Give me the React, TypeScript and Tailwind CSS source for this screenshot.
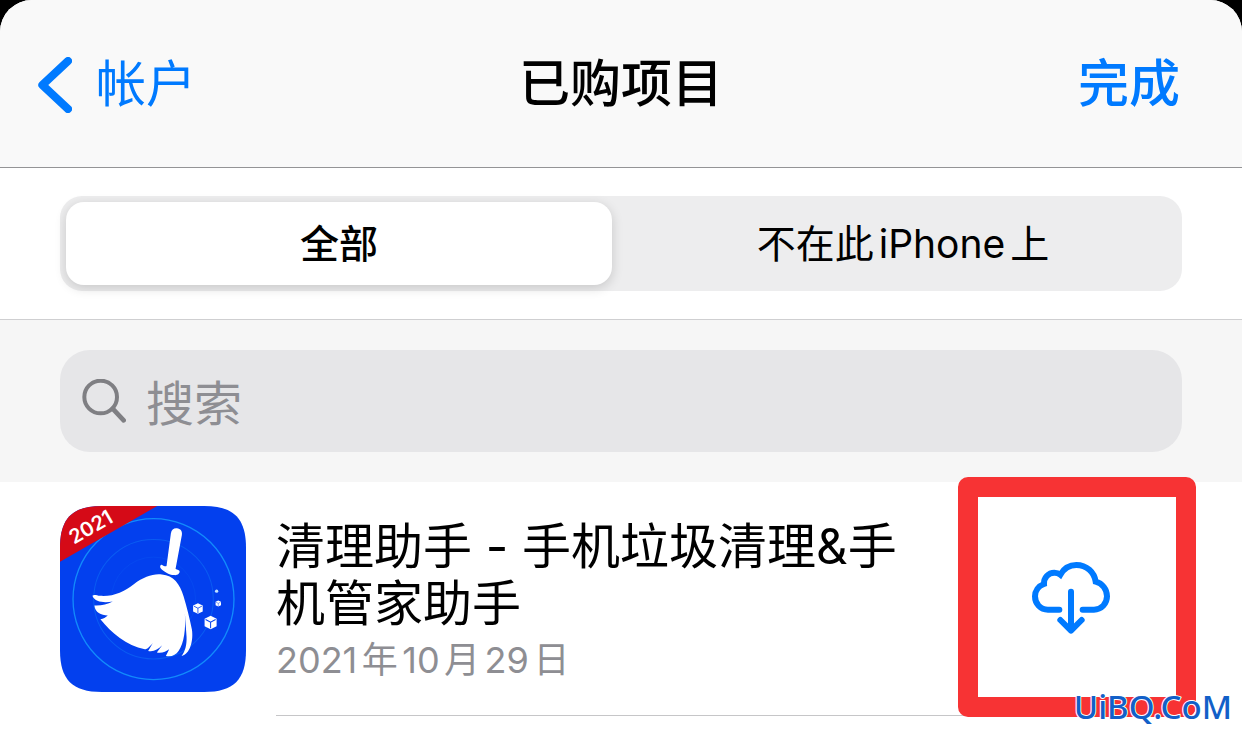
import { useState } from "react";

const segments = ["全部", "不在此iPhone上"];

const BackIcon = () => (
  <svg className="h-14 w-[34px]" viewBox="0 0 102 168" fill="none" aria-hidden="true">
    <path
      d="M90 12 L13 84 L90 156"
      stroke="#007aff"
      strokeWidth="24"
      strokeLinecap="round"
      strokeLinejoin="round"
    />
  </svg>
);

const SearchIcon = () => (
  <svg className="h-11 w-11 shrink-0" viewBox="0 0 132 132" fill="none" aria-hidden="true">
    <circle cx="56" cy="54" r="49" stroke="#7f7f83" strokeWidth="12" />
    <path d="M92 89 L125 124" stroke="#7f7f83" strokeWidth="14" strokeLinecap="round" />
  </svg>
);

const CloudIcon = () => (
  <svg className="h-[77px] w-[82px]" viewBox="270 300 246 231" fill="none" aria-hidden="true">
    <g stroke="#007aff" strokeWidth="18" strokeLinecap="round">
      <path d="M358 452H324C301 452 285 434 285 412C285 396 295 381 312 375C311 356 325 341 343 341C350 341 356 343 361 347C372 328 389 318 409 318C440 318 463 340 467 368C487 373 501 391 501 412C501 434 484 452 462 452H428" />
      <path d="M393 398V512M361 483L393 515L425 483" strokeLinejoin="round" />
    </g>
  </svg>
);

const Cube = ({ x, y, scale }: { x: number; y: number; scale: number }) => (
  <g transform={`translate(${x} ${y}) scale(${scale})`}>
    <path d="M0 -20L18 -11V11L0 20L-18 11V-11Z" fill="#fff" />
    <path d="M-15 -9L0 -1L15 -9M0 -1V17" fill="none" stroke="#0340ee" strokeWidth="3" />
  </g>
);

const AppIcon = () => (
  <svg
    className="h-[186px] w-[186px] shrink-0"
    viewBox="30 30 557 557"
    role="img"
    aria-label="清理助手"
  >
    <defs>
      <clipPath id="app-icon">
        <path d="M155 30H462C550 30 587 67 587 155V462C587 550 550 587 462 587H155C67 587 30 550 30 462V155C30 67 67 30 155 30Z" />
      </clipPath>
    </defs>
    <g clipPath="url(#app-icon)">
      <path d="M30 30H587V587H30Z" fill="#0340ee" />
      <circle cx="310" cy="309" r="241" fill="none" stroke="#128bfb" strokeWidth="4" />
      <circle cx="310" cy="309" r="179" fill="none" stroke="#0a5cf2" strokeWidth="3" />
      <circle cx="310" cy="309" r="126" fill="none" stroke="#074df0" strokeWidth="2" />
      <path d="M30 30H321L30 197Z" fill="#d50a17" />
      <path
        d="M362 112C364 101 371 96 380 97C391 98 397 106 395 117L376 219C382 222 387 222 388 225C389 233 382 238 372 237C355 236 341 226 332 217C328 212 330 206 335 206C341 210 346 212 349 210Z"
        fill="#fff"
      />
      <path
        d="M127 299C133 294 140 299 150 299C190 302 222 286 251 264C281 242 308 232 335 235C370 238 389 263 400 300C410 333 418 365 425 400C430 432 420 474 394 479C405 465 410 445 409 422L404 352C407 399 402 440 385 464C377 476 365 482 347 479L357 459C347 466 336 472 320 469L336 447C323 460 309 468 294 464L308 440C300 449 292 459 284 459C229 448 184 410 151 369C160 368 167 364 173 358C153 357 135 349 133 328C153 329 171 325 188 316C166 320 135 320 127 299Z"
        fill="#fff"
      />
      <Cube x={481} y={379} scale={1} />
      <Cube x={443} y={337} scale={0.8} />
      <Cube x={504} y={322} scale={0.45} />
      <circle cx="499" cy="285" r="5" fill="#bfe0ff" />
    </g>
    <text
      className="font-['Inter',sans-serif]"
      x="122"
      y="114"
      fontSize="60"
      fontWeight="600"
      fill="#fff"
      textAnchor="middle"
      transform="rotate(-30 122 93)"
    >
      2021
    </text>
  </svg>
);

const Watermark = () => (
  <span className="absolute right-[10px] bottom-[3px] font-['Noto_Sans',sans-serif] text-[33px] leading-[44px] font-medium text-[#1260c8] [-webkit-text-stroke:2px_white] [paint-order:stroke_fill]">
    UiBQ.CoM
  </span>
);

export default function App() {
  const [active, setActive] = useState(segments[0]);
  const [query, setQuery] = useState("");

  return (
    <div className="relative min-h-screen bg-black font-['Inter','Noto_Sans_CJK_SC',sans-serif] [text-autospace:normal]">
      <div className="min-h-screen rounded-t-[32px] bg-white">
        <header className="grid h-[168px] grid-cols-[1fr_auto_1fr] items-center rounded-t-[32px] border-b border-[#949496] bg-[#f9f9f9] px-[38px] pt-[2px]">
          <button className="flex items-center gap-6 text-[50px] text-[#007aff]">
            <BackIcon />
            帐户
          </button>
          <h1 className="text-[51px] font-medium text-black">已购项目</h1>
          <button className="justify-self-end pr-6 text-[51px] font-medium text-[#007aff]">
            完成
          </button>
        </header>

        <div className="border-b border-[#cfcfd1] px-[60px] py-7">
          <div className="grid h-[95px] grid-cols-2 gap-[18px] rounded-[22px] bg-[#ededee] p-[6px]">
            {segments.map((segment) => (
              <button
                key={segment}
                onClick={() => setActive(segment)}
                className={
                  active === segment
                    ? "rounded-[18px] bg-white pt-[2px] text-[39px] font-medium shadow-[0_3px_12px_rgba(0,0,0,0.16)]"
                    : "rounded-[18px] pt-[2px] text-[39px]"
                }
              >
                {segment}
              </button>
            ))}
          </div>
        </div>

        <div className="bg-[#f6f6f6] px-[60px] py-[30px]">
          <label className="flex h-[102px] items-center gap-5 rounded-[30px] bg-[#e6e6e8] px-[22px]">
            <SearchIcon />
            <input
              className="w-full bg-transparent pt-1 text-5xl outline-none placeholder:text-[#8e8e93]"
              type="text"
              aria-label="搜索"
              placeholder="搜索"
              value={query}
              onChange={(event) => setQuery(event.target.value)}
            />
          </label>
        </div>

        <main className="flex gap-[30px] pt-6 pr-[46px] pl-[60px]">
          <AppIcon />
          <div className="relative flex-1 border-b border-[#c6c6c8] pt-3 pb-[26px]">
            <h2 className="w-[640px] text-[49px] leading-[57px] text-black">
              清理助手 - 手机垃圾清理&amp;手机管家助手
            </h2>
            <p className="text-4xl leading-[57px] text-[#8e8e93]">2021年10月29日</p>
            <button
              aria-label="下载"
              className="absolute -top-[29px] right-0 flex h-60 w-[238px] items-center justify-center rounded-[10px] border-[20px] border-[#f73334] bg-white pr-3"
            >
              <CloudIcon />
            </button>
          </div>
        </main>
      </div>
      <Watermark />
    </div>
  );
}
